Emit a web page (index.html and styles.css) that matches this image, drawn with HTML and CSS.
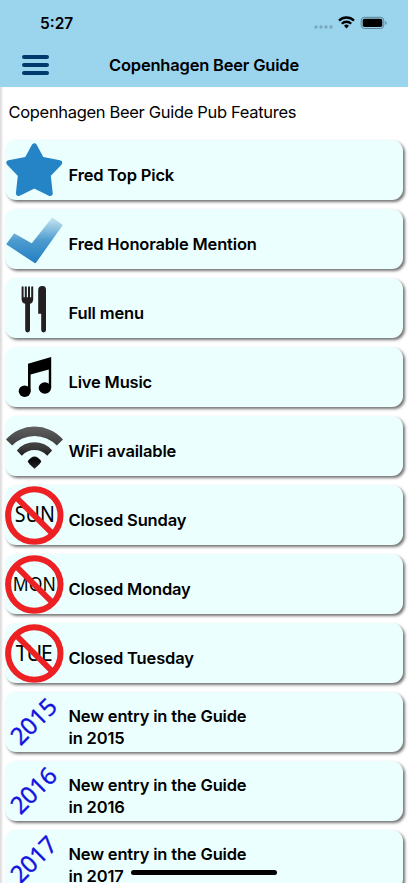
FILE: index.html
```
<!DOCTYPE html>
<html lang="en">
<head>
    <meta charset="UTF-8">
    <meta name="viewport" content="width=device-width, initial-scale=1.0">
    <title>Copenhagen Beer Guide</title>
    <link rel="stylesheet" href="styles.css">
</head>
<body>
    <!-- Header -->
    <header class="header">
        <div class="status-bar">
            <span class="time">5:27</span>
            <svg class="status-icons" width="76" height="14" viewBox="0 0 76 14">
                <g fill="#7aa9bd">
                    <circle cx="3" cy="11" r="1.7"/>
                    <circle cx="8" cy="11" r="1.7"/>
                    <circle cx="13" cy="11" r="1.7"/>
                    <circle cx="18" cy="11" r="1.7"/>
                </g>
                <g fill="none" stroke="#000" stroke-width="2.3">
                    <path d="M26 4.6a10.6 10.6 0 0 1 15 0"/>
                    <path d="M28.8 7.7a6.6 6.6 0 0 1 9.4 0"/>
                </g>
                <path d="M31 9.8a3.6 3.6 0 0 1 5 0l-2.5 2.7z"/>
                <rect x="48.2" y="1.3" width="22.6" height="11.2" rx="3.3" fill="none" stroke="#5b8395"/>
                <rect x="49.7" y="2.8" width="19.6" height="8.2" rx="1.8"/>
                <path d="M72.4 5v3.8a2.1 2.1 0 0 0 0-3.8z" fill="#5b8395"/>
            </svg>
        </div>
        <div class="nav-bar">
            <button class="menu-btn" aria-label="Menu">
                <span></span>
                <span></span>
                <span></span>
            </button>
            <h1>Copenhagen Beer Guide</h1>
        </div>
    </header>

    <!-- Feature List -->
    <main class="content">
        <p class="intro">Copenhagen Beer Guide Pub Features</p>
        <ul class="feature-list">
            <li class="feature-card">
                <svg class="icon" viewBox="0 0 60 60">
                    <path d="M29.3 6L36.6 19.5 54.5 22.8 43 34.8 45 53.2 29.3 45.6 13.6 53.2 15.6 34.8 4.1 22.8 22 19.5z" fill="#2484c6" stroke="#2484c6" stroke-width="5.4" stroke-linejoin="round"/>
                </svg>
                <span class="label">Fred Top Pick</span>
            </li>
            <li class="feature-card">
                <svg class="icon" viewBox="0 0 60 60">
                    <defs>
                        <linearGradient id="checkFill" x1="0" y1="1" x2="0" y2="0">
                            <stop offset="0" stop-color="#2480c3"/>
                            <stop offset="0.5" stop-color="#4d9bcf"/>
                            <stop offset="1" stop-color="#c4e5f1"/>
                        </linearGradient>
                    </defs>
                    <path d="M2.5 35L9.5 25.5 27 35.5 47.5 9.5 56.5 16.2 30.2 53.2z" fill="url(#checkFill)" stroke="url(#checkFill)" stroke-width="2" stroke-linejoin="round"/>
                </svg>
                <span class="label">Fred Honorable Mention</span>
            </li>
            <li class="feature-card">
                <svg class="icon" viewBox="0 0 60 60" fill="#231f20">
                    <path d="M16.6 8.8q1-1.2 2 0v10.4h1.2V8.8q1-1.2 2 0v10.4h1.2V8.8q1-1.2 2 0v10.4h1.2V8.8q1-1.2 2 0V21q0 4-3.2 4.8V52a2.4 2.4 0 0 1-4.8 0V25.8q-3.6-.8-3.6-4.8z"/>
                    <path d="M33.2 35.8V12q0-4 4-4h.6q3.2 0 3.2 4v40a2.4 2.4 0 0 1-4.8 0V35.8z"/>
                </svg>
                <span class="label">Full menu</span>
            </li>
            <li class="feature-card">
                <svg class="icon" viewBox="0 0 60 60">
                    <path d="M23 16.7L46.2 10V41h-2.4V22.6L25.6 27.6V44H23z"/>
                    <ellipse cx="19.7" cy="44.2" rx="6" ry="5.8"/>
                    <ellipse cx="39.9" cy="41" rx="6.2" ry="5.8"/>
                </svg>
                <span class="label">Live Music</span>
            </li>
            <li class="feature-card">
                <svg class="icon" viewBox="0 0 60 60">
                    <defs>
                        <linearGradient id="wifiFill" gradientUnits="userSpaceOnUse" x1="0" y1="9" x2="0" y2="52">
                            <stop offset="0" stop-color="#626262"/>
                            <stop offset="0.55" stop-color="#393939"/>
                            <stop offset="0.8" stop-color="#080808"/>
                            <stop offset="1" stop-color="#222"/>
                        </linearGradient>
                    </defs>
                    <g fill="url(#wifiFill)">
                        <path d="M1 23.4A38 38 0 0 1 58 23.4L51.8 29.6A30.5 30.5 0 0 0 7.2 29.6z"/>
                        <path d="M11.8 34.5A23 23 0 0 1 47.2 34.5L42.2 39.8A17 17 0 0 0 16.8 39.8z"/>
                        <path d="M22.7 45.2Q29.5 35.8 36.3 45.2Q35.8 47.2 29.5 52.8Q23.2 47.2 22.7 45.2z"/>
                    </g>
                </svg>
                <span class="label">WiFi available</span>
            </li>
            <li class="feature-card">
                <svg class="icon" viewBox="0 0 60 60">
                    <text class="day" x="9.8" y="37.3" font-size="21.5" textLength="40" lengthAdjust="spacingAndGlyphs">SUN</text>
                    <path class="ban" d="M10.8 12L47.8 49"/>
                    <circle class="ban" cx="29.3" cy="30.5" r="26.2"/>
                </svg>
                <span class="label">Closed Sunday</span>
            </li>
            <li class="feature-card">
                <svg class="icon" viewBox="0 0 60 60">
                    <text class="day" x="7.8" y="36.6" font-size="19" textLength="43" lengthAdjust="spacingAndGlyphs">MON</text>
                    <path class="ban" d="M10.8 12L47.8 49"/>
                    <circle class="ban" cx="29.3" cy="30.5" r="26.2"/>
                </svg>
                <span class="label">Closed Monday</span>
            </li>
            <li class="feature-card">
                <svg class="icon" viewBox="0 0 60 60">
                    <text class="day" x="10.8" y="38.3" font-size="21.5" textLength="37">TUE</text>
                    <path class="ban" d="M10.8 12L47.8 49"/>
                    <circle class="ban" cx="29.3" cy="30.5" r="26.2"/>
                </svg>
                <span class="label">Closed Tuesday</span>
            </li>
            <li class="feature-card">
                <svg class="icon" viewBox="0 0 60 60">
                    <text class="year" transform="translate(15.5 54.5) rotate(-45)" textLength="54">2015</text>
                </svg>
                <span class="label">New entry in the Guide<br>in 2015</span>
            </li>
            <li class="feature-card">
                <svg class="icon" viewBox="0 0 60 60">
                    <text class="year" transform="translate(15.5 54.5) rotate(-45)" textLength="54">2016</text>
                </svg>
                <span class="label">New entry in the Guide<br>in 2016</span>
            </li>
            <li class="feature-card">
                <svg class="icon" viewBox="0 0 60 60">
                    <text class="year" transform="translate(15.5 54.5) rotate(-45)" textLength="54">2017</text>
                </svg>
                <span class="label">New entry in the Guide<br>in 2017</span>
            </li>
        </ul>
    </main>

    <div class="home-indicator"></div>
</body>
</html>
```
FILE: styles.css
```
* {
    margin: 0;
    padding: 0;
    box-sizing: border-box;
}

body {
    height: 100vh;
    overflow: hidden;
    background: white;
    color: #000;
    font-family: Inter, "Liberation Sans", sans-serif;
}

.header {
    height: 87px;
    background: #9bd4ed;
}

.status-bar {
    display: flex;
    justify-content: space-between;
    align-items: center;
    height: 43px;
    padding: 3px 19px 0 40px;
}

.time {
    font-size: 15.5px;
    font-weight: 600;
}

.nav-bar {
    display: grid;
    grid-template-columns: 50px 1fr 50px;
    align-items: center;
    height: 43px;
}

.menu-btn {
    display: flex;
    flex-direction: column;
    gap: 4px;
    width: 28px;
    margin-left: 22px;
    background: none;
    border: none;
}

.menu-btn span {
    width: 27px;
    height: 4px;
    border-radius: 2px;
    background: #003a6c;
}

h1 {
    font-size: 16.5px;
    font-weight: 600;
    letter-spacing: -0.2px;
    text-align: center;
}

.content {
    height: 796px;
    overflow: hidden;
    padding: 0 5px;
    box-shadow: inset 3px 0 2px -1px #ddd;
}

.intro {
    height: 53.4px;
    padding-left: 3.5px;
    font-size: 16.5px;
    line-height: 51px;
    letter-spacing: -0.32px;
}

.feature-list {
    display: flex;
    flex-direction: column;
    gap: 9px;
    list-style: none;
}

.feature-card {
    display: flex;
    align-items: center;
    height: 60px;
    flex-shrink: 0;
    border-radius: 11px;
    background: #ebfffe;
    box-shadow: 2px 2px 3px rgba(0, 0, 0, 0.55);
}

.icon {
    flex-shrink: 0;
    width: 60px;
    height: 60px;
    margin-top: -1px;
    overflow: visible;
}

.label {
    padding: 11px 0 0 3.5px;
    font-size: 16.5px;
    font-weight: 600;
    line-height: 21.5px;
    letter-spacing: -0.17px;
}

.day {
    font-family: "Noto Sans", sans-serif;
    fill: #000;
}

.ban {
    fill: none;
    stroke: #ed2024;
    stroke-width: 6;
}

.year {
    font-family: "Noto Sans", sans-serif;
    font-size: 24px;
    fill: #1212e0;
    stroke: #1212e0;
    stroke-width: 0.3;
}

.home-indicator {
    position: fixed;
    bottom: 8px;
    left: 131px;
    width: 146px;
    height: 5px;
    border-radius: 3px;
    background: #000;
}
```
